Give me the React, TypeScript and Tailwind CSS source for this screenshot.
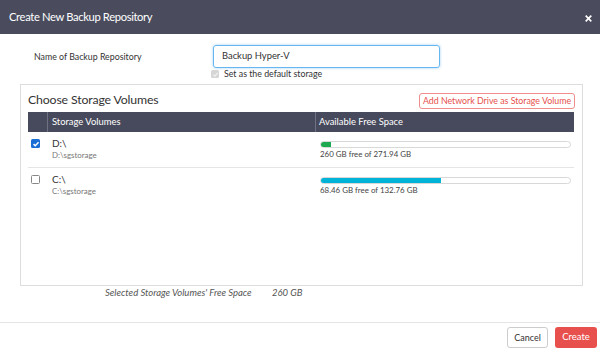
interface Volume {
  readonly name: string;
  readonly path: string;
  readonly free: string;
  readonly total: string;
  readonly pct: number;
  readonly color: string;
  readonly checked: boolean;
}

const volumes: Volume[] = [
  { name: "D:\\", path: "D:\\sgstorage", free: "260 GB", total: "271.94 GB", pct: 4, color: "bg-[#1ea84f]", checked: true },
  { name: "C:\\", path: "C:\\sgstorage", free: "68.46 GB", total: "132.76 GB", pct: 48, color: "bg-[#00b3d7]", checked: false },
];

function Check({ checked }: { readonly checked: boolean }) {
  return checked ? (
    <span className="flex h-[9px] w-[9px] items-center justify-center rounded-[1.5px] bg-[#1a6fd4]">
      <svg viewBox="0 0 12 12" className="h-[8px] w-[8px]" fill="none" stroke="white" strokeWidth="2.2">
        <path d="M2.3 6.2 4.9 8.7 9.8 3.3" />
      </svg>
    </span>
  ) : (
    <span className="block h-[9px] w-[9px] rounded-[1.5px] border border-[#888] bg-white" />
  );
}

export default function App() {
  return (
    <div className="flex h-[350px] w-[600px] flex-col bg-white font-['Lato',sans-serif] text-[#333]">
      {/* Header */}
      <div className="flex h-[34px] shrink-0 items-center justify-between bg-[#4a4c5e] pl-[9px] pr-[8px]">
        <span className="text-[11.2px] tracking-[-0.35px] text-white">Create New Backup Repository</span>
        <svg viewBox="0 0 10 10" className="mt-[2px] h-[7px] w-[7px]" fill="none" stroke="white" strokeWidth="2.4">
          <path d="M1 1 9 9M9 1 1 9" />
        </svg>
      </div>

      {/* Body */}
      <div className="flex-1 px-[20px] pt-[11px]">
        <div className="flex items-center">
          <span className="ml-[14px] w-[179px] text-[8.8px] text-[#333]">Name of Backup Repository</span>
          <div className="flex h-[23px] w-[227px] items-center rounded-[3px] border border-[#66b6f0] px-[8px] text-[9.4px] text-[#333] shadow-[0_0_3px_rgba(102,175,233,0.6)]">
            Backup Hyper-V
          </div>
        </div>
        <div className="flex h-[12px] items-center pl-[191px]">
          <span className="flex h-[8px] w-[8px] items-center justify-center rounded-[1.5px] bg-[#d6d6d6]">
            <svg viewBox="0 0 12 12" className="h-[7px] w-[7px]" fill="none" stroke="#f2f2f2" strokeWidth="2">
              <path d="M2.3 6.2 4.9 8.7 9.8 3.3" />
            </svg>
          </span>
          <span className="ml-[5px] text-[8.8px] text-[#333]">Set as the default storage</span>
        </div>

        {/* Storage panel */}
        <div className="mt-[4px] h-[202px] w-[563px] border border-[#ddd] px-[7px]">
          <div className="flex h-[27px] items-center justify-between pt-[3px]">
            <span className="text-[12.3px] leading-none tracking-[-0.15px] text-[#333]">Choose Storage Volumes</span>
            <span className="mt-[1px] flex h-[16px] w-[156px] items-center justify-center rounded-[3px] border border-[#f08e8b] text-[8.8px] text-[#e6504c]">
              Add Network Drive as Storage Volume
            </span>
          </div>
          <div className="w-[546px]">
            <div className="flex h-[20px] bg-[#474a5c] text-[9.4px] text-white">
              <div className="w-[20px] border-r border-[#6e7182]" />
              <div className="flex w-[268px] items-center border-r border-[#6e7182] pl-[4px]">Storage Volumes</div>
              <div className="flex items-center pl-[3px]">Available Free Space</div>
            </div>
            {volumes.map((v, i) => (
              <div key={v.name} className={`flex h-[36px] ${i === 0 ? "border-b border-[#e5e5e5]" : ""}`}>
                <div className="w-[20px] pl-[3px] pt-[7px]">
                  <Check checked={v.checked} />
                </div>
                <div className="w-[268px] pl-[4px] pt-[5px]">
                  <div className="text-[10px] leading-[13px] text-[#333]">{v.name}</div>
                  <div className="text-[7.9px] leading-[11px] text-[#777]">{v.path}</div>
                </div>
                <div className="flex-1 pl-[4px] pr-[3px] pt-[9px]">
                  <div className="h-[7px] w-[251px] overflow-hidden rounded-full border border-[#d8d8d8] bg-white">
                    <div className={`h-full ${v.color}`} style={{ width: `${v.pct}%` }} />
                  </div>
                  <div className="mt-[1px] text-[7.9px] leading-[11px] text-[#444]">
                    {v.free} free of {v.total}
                  </div>
                </div>
              </div>
            ))}
          </div>
        </div>

        <div className="mt-[1px] flex text-[9.5px] italic leading-[12px] text-[#555]">
          <span className="ml-[85px] w-[167px]">Selected Storage Volumes' Free Space</span>
          <span>260 GB</span>
        </div>
      </div>

      {/* Footer */}
      <div className="flex h-[28px] shrink-0 items-start justify-end gap-[7px] border-t border-[#e5e5e5] pr-[3px] pt-[4px]">
        <button className="h-[21px] w-[41px] rounded-[3px] border border-[#ccc] bg-white text-[9px] text-[#333]">Cancel</button>
        <button className="h-[21px] w-[42px] rounded-[3px] bg-[#e8504d] text-[9.5px] text-white">Create</button>
      </div>
    </div>
  );
}
